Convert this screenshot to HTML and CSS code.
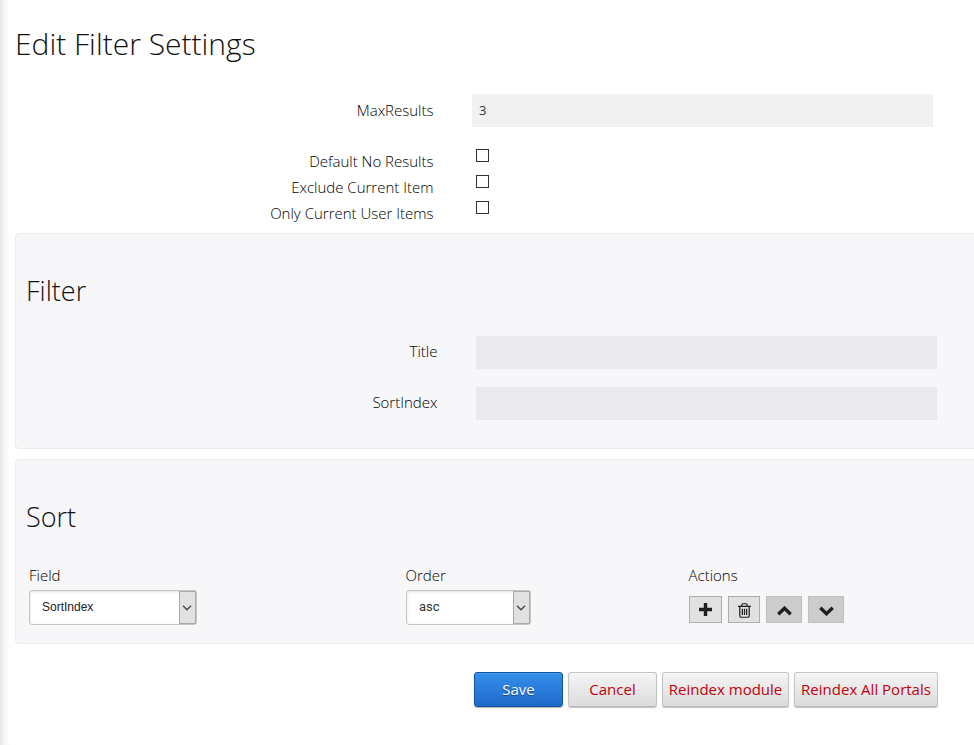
FILE: index.html
```html
<!DOCTYPE html>
<html lang="en">
<head>
<meta charset="utf-8">
<title>Edit Filter Settings</title>
<link rel="stylesheet" href="styles.css">
</head>
<body>
<main class="page">
  <h1>Edit Filter Settings</h1>
  <form class="settings">
    <div class="row"><label for="max">MaxResults</label><input class="text" id="max" type="text" value="3"></div>
    <div class="checks">
      <div class="check-row"><label for="c1">Default No Results</label><input class="check" id="c1" type="checkbox"></div>
      <div class="check-row"><label for="c2">Exclude Current Item</label><input class="check" id="c2" type="checkbox"></div>
      <div class="check-row"><label for="c3">Only Current User Items</label><input class="check" id="c3" type="checkbox"></div>
    </div>
    <section class="panel filter">
      <h2>Filter</h2>
      <div class="row"><label for="title">Title</label><input class="text" id="title" type="text"></div>
      <div class="row"><label for="sort">SortIndex</label><input class="text" id="sort" type="text"></div>
    </section>
    <section class="panel sort">
      <h2>Sort</h2>
      <div class="columns">
        <div class="column">
          <div class="caption">Field</div>
          <div class="select field"><span class="value">SortIndex</span><span class="arrow"><svg width="10" height="6" viewBox="0 0 10 6"><path d="M1 .8 5 4.8 9 .8"/></svg></span></div>
        </div>
        <div class="column">
          <div class="caption">Order</div>
          <div class="select order"><span class="value">asc</span><span class="arrow"><svg width="10" height="6" viewBox="0 0 10 6"><path d="M1 .8 5 4.8 9 .8"/></svg></span></div>
        </div>
        <div class="column">
          <div class="caption">Actions</div>
          <div class="actions">
            <button type="button" class="tool plus" aria-label="Add"><svg width="13" height="13" viewBox="0 0 13 13"><path d="M6.5 0v13M0 6.5h13" stroke-width="3.4"/></svg></button>
            <button type="button" class="tool trash" aria-label="Delete"><svg width="13" height="15" viewBox="0 0 12 14"><path d="M0 3.1h12M3.5 3V1.8Q3.5.7 4.5.7h3q1 0 1 1.1V3M1.6 3.2v8.6q0 1.5 1.3 1.5h6.2q1.3 0 1.3-1.5V3.2M4 5.3v5.8M6 5.3v5.8M8 5.3v5.8" stroke-width="1.15"/></svg></button>
            <button type="button" class="tool move" aria-label="Move up"><svg width="15" height="10" viewBox="0 0 15 10"><path d="M1.3 8.2 7.5 2.2l6.2 6" stroke-width="3.3"/></svg></button>
            <button type="button" class="tool move" aria-label="Move down"><svg width="15" height="10" viewBox="0 0 15 10"><path d="M1.3 1.8 7.5 7.8l6.2-6" stroke-width="3.3"/></svg></button>
          </div>
        </div>
      </div>
    </section>
    <div class="buttons">
      <button type="button" class="btn save">Save</button>
      <button type="button" class="btn cancel">Cancel</button>
      <button type="button" class="btn module">Reindex module</button>
      <button type="button" class="btn portals">Reindex All Portals</button>
    </div>
  </form>
</main>
</body>
</html>
```
FILE: styles.css
```css
* { box-sizing: border-box; }
html, body { height: 100%; }
body {
  margin: 0;
  overflow: hidden;
  color: #000;
  background: #fff linear-gradient(to right, #e4e4e4, #f5f5f5 4px, #fff 10px) no-repeat;
  font: 300 15px/20px "Open Sans", sans-serif;
}
.page { padding: 24px 0 0 15px; }
h1, h2 { margin: 0; font-weight: 300; }
h1 { height: 70px; font-size: 30px; line-height: 40px; color: #111; }
h2 { font-size: 27px; line-height: 38px; color: #111; }
.row { display: grid; grid-template-columns: 419px 461px; column-gap: 38px; height: 51px; }
.row label { padding: 6px .5px 0 0; text-align: right; }
.filter .row label { padding-top: 5px; }
.text {
  width: 461px;
  height: 33px;
  padding: 0 7px 2px;
  border: 0;
  border-radius: 0;
  outline: 0;
  background: #f1f1f1;
  color: #333;
  font: 400 13px "Open Sans", sans-serif;
}
.filter .text { background: #eaeaec; }
.checks { padding-top: 4px; height: 88px; }
.check-row { display: grid; grid-template-columns: 419px 13px; column-gap: 42px; height: 26px; }
.check-row label { padding: 2px .5px 0 0; text-align: right; }
.check { appearance: none; width: 13px; height: 13px; margin: 0; border: 1px solid #333; background: #fff; }
.panel {
  width: 980px;
  border: 1px solid #ebebec;
  border-radius: 4px;
  background: #f7f7f9;
}
.filter { height: 216px; margin-bottom: 10px; padding: 38px 0 0 3px; }
.filter h2 { height: 64px; padding-left: 7px; }
.sort { height: 185px; padding: 38px 0 0 10px; }
.sort h2 { height: 67px; }
.columns { display: grid; grid-template-columns: 377px 283px 200px; padding-left: 3px; }
.caption { height: 25px; }
.column:nth-child(n+2) .caption { margin-left: -.5px; }
.select {
  display: flex;
  height: 35px;
  border: 1px solid #c5c5c5;
  border-radius: 3px;
  background: #fff;
  box-shadow: inset 0 1px 3px rgba(0, 0, 0, .12);
  color: #222;
  font: 400 12px/32px "Liberation Sans", sans-serif;
}
.field { width: 168px; }
.order { width: 125px; }
.value { flex: 1; padding-left: 12px; }
.order .value { font: 400 13px/32px Roboto, sans-serif; color: #333; }
.arrow { display: flex; align-items: center; justify-content: center; width: 17px; padding-right: 1px; border: 1px solid #aaa; background: #e1e1e1; }
svg { display: block; flex: none; fill: none; stroke: #1e1e1e; }
.arrow svg { stroke: #444; stroke-width: 1.3; }
.actions { display: flex; gap: 6px; padding-top: 6px; }
.tool { display: flex; align-items: center; justify-content: center; width: 36px; height: 27px; padding: 0; border: 1px solid #adadad; background: #e1e1e1; }
.plus { width: 33px; }
.trash { width: 32px; padding-top: 1px; }
.move { border-color: #bfbfbf; background: #ccc; padding-top: 3px; }
.buttons { display: flex; gap: 5px; padding: 28px 0 0 459px; }
.btn {
  height: 35px;
  padding: 0 0 1px;
  border: 1px solid #c4c4c4;
  border-bottom-color: #b9b9b9;
  border-radius: 3px;
  background: linear-gradient(#f4f4f4, #dcdcdc);
  box-shadow: inset 0 1px #fafafa, 0 1px 1px rgba(0, 0, 0, .25);
  color: #c2000b;
  font: 400 15px "Open Sans", sans-serif;
  white-space: nowrap;
}
.save { width: 89px; border-color: #0f559f; background: linear-gradient(#358eea, #1e6acb); box-shadow: inset 0 1px #4798ed, 0 1px 1px rgba(0, 0, 0, .3); color: #fff; text-shadow: 0 1px 1px rgba(0, 0, 0, .4); }
.cancel { width: 89px; }
.module { width: 127px; }
.portals { width: 144px; }
```
